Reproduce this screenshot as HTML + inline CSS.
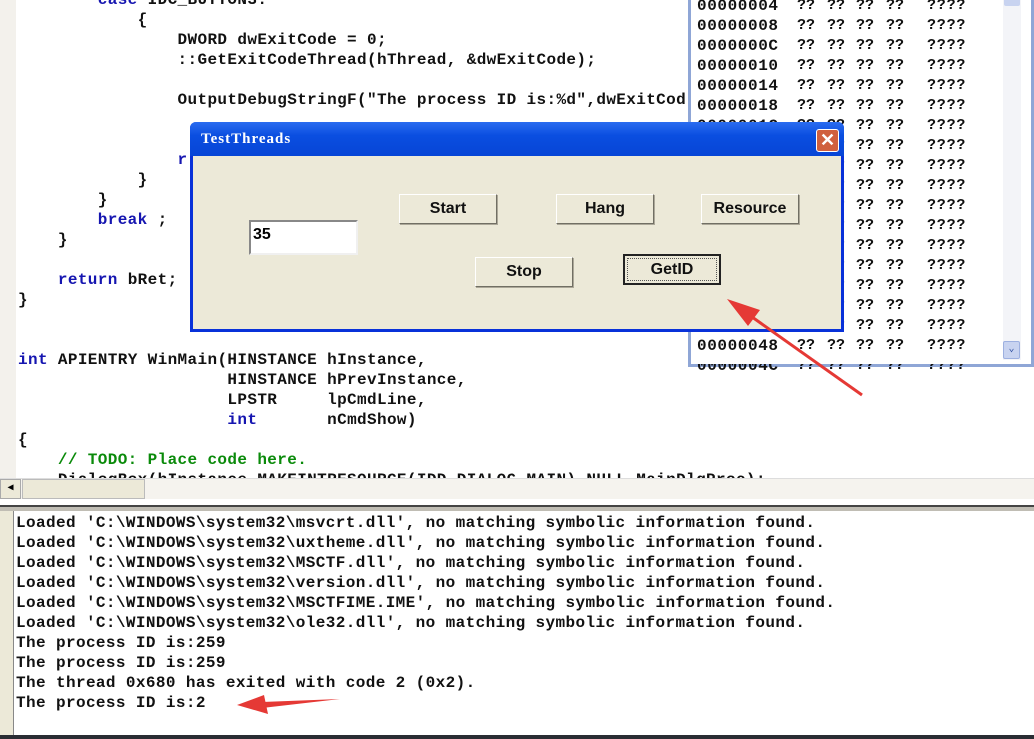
<!DOCTYPE html>
<html><head><meta charset="utf-8"><style>
*{margin:0;padding:0;box-sizing:border-box}
body{width:1034px;height:739px;overflow:hidden;background:#fff;position:relative;font-family:"Liberation Mono","DejaVu Sans Mono",monospace;}
.mono{font-family:"Liberation Mono",monospace;font-weight:bold;font-size:16px;letter-spacing:0.37px;white-space:pre;color:#111;}
.ln{position:absolute;height:20px;line-height:20px}
.kw{color:#1515b0}.cm{color:#0a8a0a}
.gut{position:absolute;left:0;top:0;width:16px;height:480px;background:#f3f1ec}
.btn{position:absolute;background:#ece9d8;border:1px solid;border-color:#fff #716f64 #716f64 #fff;box-shadow:1px 1px 0 #aca899;font-family:"Liberation Sans",Arial,sans-serif;font-weight:bold;font-size:16px;text-align:center;color:#111}
.mem{position:absolute;font-family:"Liberation Mono",monospace;font-weight:bold;font-size:15px;line-height:20px;white-space:pre;color:#111;top:-4px}
</style></head><body>
<div class="gut"></div>
<div class="mono" style="position:absolute;left:18px;top:-10px">
<div class="ln" style="top:0"><span class="kw">        case</span> IDC_BUTTON3:</div>
<div class="ln" style="top:20px">            {</div>
<div class="ln" style="top:40px">                DWORD dwExitCode = 0;</div>
<div class="ln" style="top:60px">                ::GetExitCodeThread(hThread, &amp;dwExitCode);</div>
<div class="ln" style="top:100px">                OutputDebugStringF("The process ID is:%d",dwExitCod</div>
<div class="ln kw" style="top:160px">                r</div>
<div class="ln" style="top:180px">            }</div>
<div class="ln" style="top:200px">        }</div>
<div class="ln" style="top:220px"><span class="kw">        break</span> ;</div>
<div class="ln" style="top:240px">    }</div>
<div class="ln" style="top:280px"><span class="kw">    return</span> bRet;</div>
<div class="ln" style="top:300px">}</div>
<div class="ln" style="top:360px"><span class="kw">int</span> APIENTRY WinMain(HINSTANCE hInstance,</div>
<div class="ln" style="top:380px">                     HINSTANCE hPrevInstance,</div>
<div class="ln" style="top:400px">                     LPSTR     lpCmdLine,</div>
<div class="ln" style="top:420px"><span class="kw">                     int</span>       nCmdShow)</div>
<div class="ln" style="top:440px">{</div>
<div class="ln cm" style="top:460px">    // TODO: Place code here.</div>
<div class="ln" style="top:480px">    DialogBox(hInstance,MAKEINTRESOURCE(IDD_DIALOG_MAIN),NULL,MainDlgProc);</div>
</div>
<!-- memory window -->
<div style="position:absolute;left:688px;top:-4px;width:346px;height:371px;background:#fff;border:3px solid #8fa6d6;border-top:none">
<div style="position:absolute;right:10px;top:0;width:18px;height:364px;background:#f3f4f8"></div>
<div style="position:absolute;right:11px;top:0;width:16px;height:10px;background:#c8d3f0;border-radius:2px"></div>
<div style="position:absolute;right:11px;top:345px;width:17px;height:18px;background:#c8d3f0;border:1px solid #9db0e0;border-radius:2px;font-size:10px;color:#3050a0;text-align:center;line-height:16px">&#8964;</div>
</div>
<div class="mem" style="left:697px;font-size:16px;letter-spacing:0.6px">00000004
00000008
0000000C
00000010
00000014
00000018
0000001C
00000020
00000024
00000028
0000002C
00000030
00000034
00000038
0000003C
00000040
00000044
00000048
0000004C</div>
<div class="mem" style="left:797px">??
??
??
??
??
??
??
??
??
??
??
??
??
??
??
??
??
??
??</div>
<div class="mem" style="left:827px">??
??
??
??
??
??
??
??
??
??
??
??
??
??
??
??
??
??
??</div>
<div class="mem" style="left:856px">??
??
??
??
??
??
??
??
??
??
??
??
??
??
??
??
??
??
??</div>
<div class="mem" style="left:886px">??
??
??
??
??
??
??
??
??
??
??
??
??
??
??
??
??
??
??</div>
<div class="mem" style="left:927px;letter-spacing:0.8px">????
????
????
????
????
????
????
????
????
????
????
????
????
????
????
????
????
????
????</div>
<div style="position:absolute;left:691px;top:359px;width:310px;height:5px;background:#fff"></div>
<!-- dialog -->
<div style="position:absolute;left:190px;top:122px;width:654px;height:210px;background:#ece9d8;border:3px solid #0831d9;border-top:none;border-radius:6px 6px 0 0">
<div style="position:absolute;left:-3px;right:-3px;top:0;height:34px;background:linear-gradient(#2a6cf0,#0a4ee0 40%,#0745d6);border-radius:6px 6px 0 0"></div>
<div style="position:absolute;left:8px;top:9px;font-family:'Liberation Serif',serif;font-weight:bold;font-size:15px;color:#fff;letter-spacing:1px">TestThreads</div>
<div style="position:absolute;left:623px;top:7px;width:23px;height:23px;background:#d0603e;border:1px solid #fff;border-radius:3px;color:#fff;font:bold 18px/20px 'Liberation Sans',sans-serif;text-align:center">&#10005;</div>
</div>
<div style="position:absolute;left:249px;top:220px;width:109px;height:35px;background:#fff;border:2px solid;border-color:#888 #f0f0f0 #f0f0f0 #888;font:bold 16px/26px 'Liberation Sans',sans-serif;padding-left:2px">35</div>
<div class="btn" style="left:399px;top:194px;width:98px;height:30px;line-height:28px">Start</div>
<div class="btn" style="left:556px;top:194px;width:98px;height:30px;line-height:28px">Hang</div>
<div class="btn" style="left:701px;top:194px;width:98px;height:30px;line-height:28px">Resource</div>
<div class="btn" style="left:475px;top:257px;width:98px;height:30px;line-height:28px">Stop</div>
<div class="btn" style="left:623px;top:254px;width:98px;height:31px;line-height:27px;border:2px solid #222;box-shadow:none;outline:1px dotted #555;outline-offset:-5px">GetID</div>
<!-- scrollbar -->
<div style="position:absolute;left:0;top:478px;width:1034px;height:21px;background:#f5f3ee;border-top:1px solid #ddd"></div>
<div style="position:absolute;left:0;top:479px;width:21px;height:20px;background:#ece9d8;border:1px solid #aaa;font-size:10px;text-align:center;line-height:18px">&#9664;</div>
<div style="position:absolute;left:22px;top:479px;width:123px;height:20px;background:#ece9d8;border:1px solid #bbb"></div>
<div style="position:absolute;left:0;top:505px;width:1034px;height:2px;background:#444"></div>
<div style="position:absolute;left:0;top:507px;width:1034px;height:4px;background:#c0bdb4"></div>
<div style="position:absolute;left:0;top:511px;width:14px;height:224px;background:#ece9d8;border-right:1px solid #888"></div>
<div class="mono" style="position:absolute;left:16px;top:513px;line-height:20px;letter-spacing:0.39px">Loaded 'C:\WINDOWS\system32\msvcrt.dll', no matching symbolic information found.
Loaded 'C:\WINDOWS\system32\uxtheme.dll', no matching symbolic information found.
Loaded 'C:\WINDOWS\system32\MSCTF.dll', no matching symbolic information found.
Loaded 'C:\WINDOWS\system32\version.dll', no matching symbolic information found.
Loaded 'C:\WINDOWS\system32\MSCTFIME.IME', no matching symbolic information found.
Loaded 'C:\WINDOWS\system32\ole32.dll', no matching symbolic information found.
The process ID is:259
The process ID is:259
The thread 0x680 has exited with code 2 (0x2).
The process ID is:2</div>
<div style="position:absolute;left:0;top:735px;width:1034px;height:4px;background:#2a2d33"></div>
<!-- arrows -->
<svg width="1034" height="739" style="position:absolute;left:0;top:0">
<line x1="862" y1="395" x2="745" y2="312" stroke="#e53935" stroke-width="3"/>
<polygon points="727,299 760,310 748,326" fill="#e53935"/>
<polygon points="340,699 262,702 262,708" fill="#e53935"/>
<polygon points="237,705 264,695 268,714" fill="#e53935"/>
</svg>
</body></html>
